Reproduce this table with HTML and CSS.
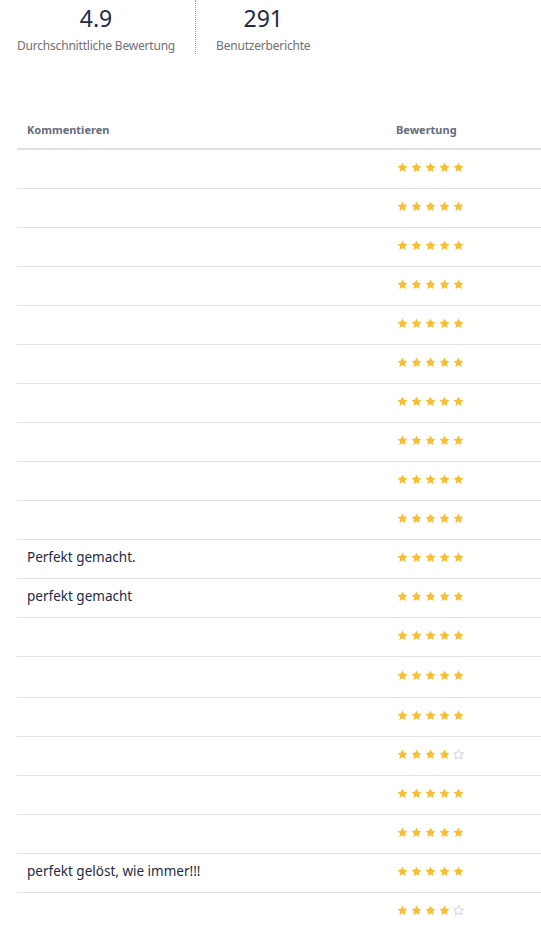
FILE: index.html
```html
<!DOCTYPE html>
<html lang="de">
<head>
<meta charset="utf-8">
<title>Bewertungen</title>
<link rel="stylesheet" href="styles.css">
</head>
<body>
<div class="page">
  <div class="stats">
    <div class="stat">
      <div class="stat-value">4.9</div>
      <div class="stat-label">Durchschnittliche Bewertung</div>
    </div>
    <div class="stat stat-second">
      <div class="stat-value">291</div>
      <div class="stat-label">Benutzerberichte</div>
    </div>
  </div>

  <svg width="0" height="0" class="defs" aria-hidden="true">
    <defs>
      <symbol id="star" viewBox="0 0 24 24">
        <path d="M12 1.2l3.3 6.7 7.4 1.1-5.35 5.2 1.27 7.35L12 18.1l-6.62 3.45 1.27-7.35L1.3 9l7.4-1.1z"/>
      </symbol>
    </defs>
  </svg>

  <table class="reviews">
    <thead>
      <tr><th class="col-comment">Kommentieren</th><th class="col-rating">Bewertung</th></tr>
    </thead>
    <tbody id="rows">
    </tbody>
  </table>
</div>
<script>
  var data = [
    ["",5],["",5],["",5],["",5],["",5],["",5],["",5],["",5],["",5],["",5],
    ["Perfekt gemacht.",5],["perfekt gemacht",5],["",5],["",5,"tall"],["",5],["",4],["",5],["",5],
    ["perfekt gelöst, wie immer!!!",5],["",4]
  ];
  var tb = document.getElementById('rows');
  data.forEach(function(d){
    var tr = document.createElement('tr');
    if (d[2]) tr.className = 'row-tall';
    var c = document.createElement('td'); c.className='col-comment'; c.textContent = d[0];
    var r = document.createElement('td'); r.className='col-rating';
    var s = '<span class="stars">';
    for (var i=0;i<5;i++){
      s += '<svg class="star ' + (i < d[1] ? 'on' : 'off') + '" viewBox="0 0 24 24"><use href="#star"/></svg>';
    }
    r.innerHTML = s + '</span>';
    tr.appendChild(c); tr.appendChild(r); tb.appendChild(tr);
  });
</script>
</body>
</html>
```

FILE: styles.css
```css
html, body {
  margin: 0;
  padding: 0;
  background: #ffffff;
}
body {
  font-family: "Noto Sans", "Open Sans", sans-serif;
  color: #1d2a44;
}
.page {
  padding-left: 17px;
}
.defs {
  position: absolute;
}
.stats {
  display: flex;
  align-items: stretch;
}
.stat {
  text-align: center;
  padding: 3px 20px 0 0;
  border-right: 1px dotted #9a9a9a;
  height: 51px;
}
.stat-second {
  border-right: none;
  padding: 3px 0 0 20px;
}
.stat-value {
  font-size: 23px;
  line-height: 30px;
  color: #1d2a4a;
}
.stat-label {
  margin-top: 5px;
  font-size: 12px;
  line-height: 16px;
  color: #6f7072;
  letter-spacing: -0.2px;
}
.reviews {
  margin-top: 57px;
  width: 524px;
  border-collapse: collapse;
}
.reviews th {
  text-align: left;
  font-size: 11px;
  font-weight: 700;
  color: #656c7a;
  padding: 0 10px;
  height: 37px;
  border-bottom: 2px solid #dedfe3;
  vertical-align: middle;
}
.reviews td {
  padding: 0 10px 4px;
  height: 34px;
  border-bottom: 1px solid #e1e2e6;
  font-size: 13.5px;
  color: #1d2a44;
  vertical-align: middle;
}
.reviews tr.row-tall td {
  height: 36px;
}
.col-comment {
  width: 349px;
}
.stars {
  display: flex;
  gap: 3px;
  align-items: center;
  margin-left: 1px;
}
.star {
  width: 11px;
  height: 11px;
  display: block;
}
.star.on {
  fill: #f7bf37;
}
.star.off {
  fill: none;
  stroke: #c9ccd2;
  stroke-width: 2;
}
```
